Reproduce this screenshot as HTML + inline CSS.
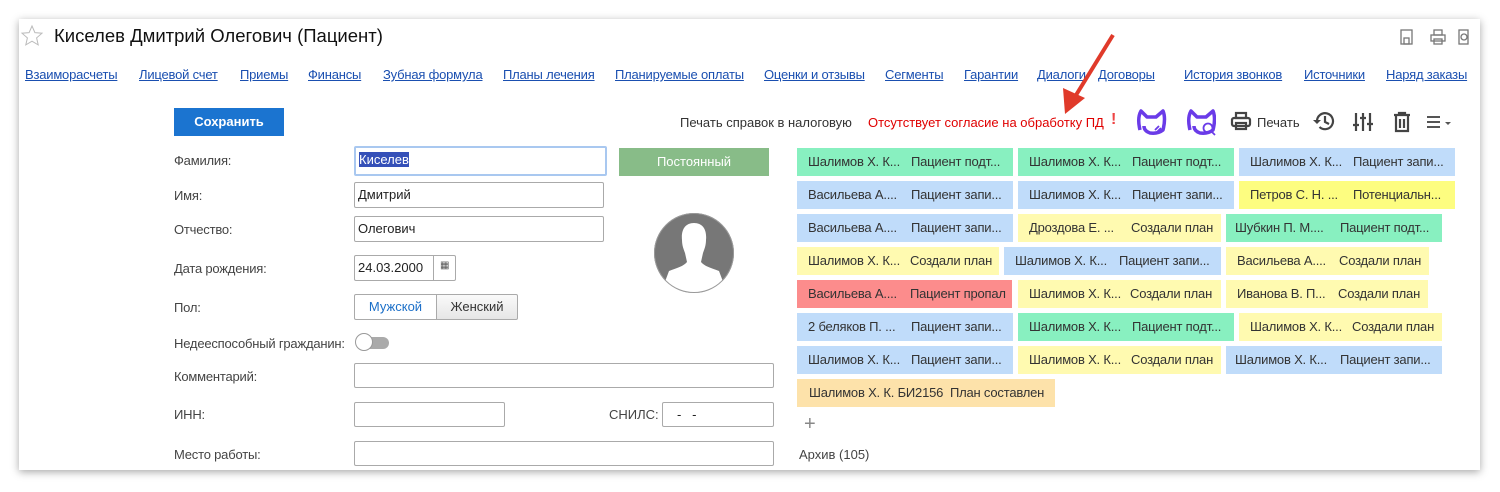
<!DOCTYPE html>
<html><head><meta charset="utf-8"><style>
body{margin:0;width:1500px;height:492px;background:#fff;font-family:"Liberation Sans",sans-serif;font-size:13px;color:#333;position:relative;overflow:hidden}
.a{position:absolute;white-space:nowrap}
#panel{position:absolute;left:19px;top:19px;width:1461px;height:451px;background:#fff;box-shadow:0 2px 8px rgba(0,0,0,.35)}
.nav{position:absolute;top:67px;color:#1a4fb0;text-decoration:underline;font-size:13px;letter-spacing:-.2px}
.lbl{position:absolute;left:174px;color:#444;letter-spacing:-.2px}
.inp{position:absolute;border:1px solid #aaa;border-radius:2px;background:#fff;height:26px;box-sizing:border-box;padding:4px 3px;font-size:13px;color:#222}
.c{position:absolute;height:28px;line-height:28px;color:#333;font-size:13px;letter-spacing:-.2px;white-space:nowrap;overflow:hidden}
.c span{position:absolute}
.g{background:#88f0c0}.b{background:#c0dcfa}.y{background:#fffab0}.Y{background:#fdfd80}.r{background:#fc8c8c}.o{background:#fde2aa}
</style></head><body>
<div id="panel"></div>
<svg class="a" style="left:20px;top:24px" width="24" height="24" viewBox="0 0 24 24"><path d="M12 2l2.9 6.6 7.1.6-5.4 4.7 1.6 7L12 17.2 5.8 20.9l1.6-7L2 9.2l7.1-.6z" fill="none" stroke="#bbb" stroke-width="1"/></svg>
<div class="a" style="left:54px;top:25px;font-size:18.5px;color:#111">Киселев Дмитрий Олегович (Пациент)</div>
<svg class="a" style="left:1399px;top:28px" width="70" height="18"><g fill="none" stroke="#777" stroke-width="1.3"><rect x="2" y="2" width="11" height="14"/><rect x="5" y="10" width="5" height="6"/><rect x="32" y="7" width="14" height="6"/><rect x="35" y="2" width="8" height="5"/><rect x="35" y="11" width="8" height="5"/><rect x="60" y="2" width="9" height="14"/><circle cx="65" cy="9" r="3"/></g></svg>
<a class="nav" style="left:25px">Взаиморасчеты</a>
<a class="nav" style="left:139px">Лицевой счет</a>
<a class="nav" style="left:240px">Приемы</a>
<a class="nav" style="left:308px">Финансы</a>
<a class="nav" style="left:383px">Зубная формула</a>
<a class="nav" style="left:503px">Планы лечения</a>
<a class="nav" style="left:615px">Планируемые оплаты</a>
<a class="nav" style="left:764px">Оценки и отзывы</a>
<a class="nav" style="left:885px">Сегменты</a>
<a class="nav" style="left:964px">Гарантии</a>
<a class="nav" style="left:1037px">Диалоги</a>
<a class="nav" style="left:1098px">Договоры</a>
<a class="nav" style="left:1184px">История звонков</a>
<a class="nav" style="left:1304px">Источники</a>
<a class="nav" style="left:1386px">Наряд заказы</a>
<div class="a" style="left:174px;top:108px;width:110px;height:28px;background:#1b74d0;color:#fff;font-weight:bold;text-align:center;line-height:28px;font-size:13px">Сохранить</div>
<div class="a" style="left:680px;top:115px;color:#333">Печать справок в налоговую</div>
<div class="a" style="left:868px;top:115px;color:#e00000">Отсутствует согласие на обработку ПД</div>
<div class="a" style="left:1111px;top:111px;color:#e44;font-weight:bold;font-size:16px">!</div>
<svg class="a" style="left:1136px;top:108px" width="80" height="32"><g fill="none" stroke="#6a3be8" stroke-width="3.5" stroke-linejoin="round"><path d="M4 22 Q1 10 5 3 L11 9 L20 9 L27 3 Q30 10 27 22 Q22 26 14 25 Q8 23 8 18"/><path d="M54 22 Q51 10 55 3 L61 9 L70 9 L77 3 Q80 10 77 22 Q72 26 64 25 Q58 23 58 18"/></g><g fill="none" stroke="#6a3be8" stroke-width="1.8"><circle cx="72" cy="20" r="4.5"/><path d="M75 23l4 4"/><path d="M19 22l4-4m-2 6l4-4"/></g></svg>
<svg class="a" style="left:1230px;top:111px" width="22" height="20"><g fill="none" stroke="#444" stroke-width="2.2"><rect x="2" y="7" width="18" height="8" rx="2"/><rect x="6" y="2" width="10" height="5"/><rect x="6" y="12" width="10" height="6"/></g></svg>
<div class="a" style="left:1257px;top:115px;color:#333">Печать</div>
<svg class="a" style="left:1312px;top:110px" width="24" height="22"><g fill="none" stroke="#444" stroke-width="2.2"><path d="M5 11a8 8 0 1 1 2.5 6"/><path d="M13 6v6l4 2"/></g><path d="M1 10h8l-4 4z" fill="#444"/></svg>
<svg class="a" style="left:1352px;top:111px" width="22" height="22"><g stroke="#444" stroke-width="2.2"><path d="M4 2v18M11 2v18M18 2v18M1 14h6M8 7h6M15 13h6"/></g></svg>
<svg class="a" style="left:1392px;top:111px" width="20" height="22"><g fill="none" stroke="#444" stroke-width="2.2"><path d="M2 4h16M7 4V2h6v2M4 5v15h12V5M8 8v9M12 8v9"/></g></svg>
<svg class="a" style="left:1426px;top:114px" width="28" height="16"><g stroke="#555" stroke-width="2"><path d="M1 3h13M1 8h13M1 13h13"/></g><path d="M19 8h6l-3 3z" fill="#555"/></svg>
<svg class="a" style="left:1055px;top:30px" width="70" height="90"><path d="M58 5 L18 70" stroke="#e03a2a" stroke-width="4"/><path d="M10 84 L8 58 L30 68 Z" fill="#e03a2a"/></svg>

<div class="lbl" style="top:153px">Фамилия:</div>
<div class="inp" style="left:354px;top:146px;width:253px;height:30px;border:2px solid #a9c8f0"><span style="background:#3550b8;color:#fff">Киселев</span></div>
<div class="a" style="left:619px;top:148px;width:150px;height:28px;background:#88bc88;color:#fff;text-align:center;line-height:28px">Постоянный</div>
<div class="lbl" style="top:188px">Имя:</div>
<div class="inp" style="left:354px;top:182px;width:250px">Дмитрий</div>
<div class="lbl" style="top:222px">Отчество:</div>
<div class="inp" style="left:354px;top:216px;width:250px">Олегович</div>
<div class="lbl" style="top:261px">Дата рождения:</div>
<div class="inp" style="left:354px;top:255px;width:102px">24.03.2000</div>
<div class="a" style="left:433px;top:256px;width:1px;height:24px;background:#aaa"></div>
<div class="a" style="left:440px;top:260px;font-size:10px;color:#555">▦</div>
<svg class="a" style="left:654px;top:213px" width="80" height="82"><defs><clipPath id="cp"><ellipse cx="40" cy="40" rx="40" ry="40"/></clipPath></defs><ellipse cx="40" cy="40" rx="40" ry="40" fill="#777"/><g clip-path="url(#cp)"><path d="M40 10c-9 0-13 7-12 17 0 6 2 10 3 13l2 9c-3 4-10 6-18 9L6 82h68l-9-24c-8-3-15-5-18-9l2-9c1-3 3-7 3-13 1-10-3-17-12-17z" fill="#fff"/></g><ellipse cx="40" cy="40" rx="39.5" ry="39.5" fill="none" stroke="#999"/></svg>
<div class="lbl" style="top:300px">Пол:</div>
<div class="a" style="left:354px;top:294px;width:81px;height:24px;border:1px solid #aaa;border-radius:2px 0 0 2px;background:#fff;color:#1b6fc8;text-align:center;line-height:24px">Мужской</div>
<div class="a" style="left:436px;top:294px;width:80px;height:24px;border:1px solid #aaa;border-radius:0 2px 2px 0;background:linear-gradient(#fafafa,#e6e6e6);color:#333;text-align:center;line-height:24px">Женский</div>
<div class="lbl" style="top:336px">Недееспособный гражданин:</div>
<div class="a" style="left:356px;top:337px;width:33px;height:12px;border-radius:6px;background:#aaa"></div>
<div class="a" style="left:355px;top:333px;width:18px;height:18px;border-radius:50%;background:#fff;border:1px solid #999;box-sizing:border-box"></div>
<div class="lbl" style="top:369px">Комментарий:</div>
<div class="inp" style="left:354px;top:363px;width:420px;height:25px"></div>
<div class="lbl" style="top:407px">ИНН:</div>
<div class="inp" style="left:354px;top:402px;width:151px;height:25px"></div>
<div class="a" style="left:609px;top:407px;color:#444">СНИЛС:</div>
<div class="inp" style="left:662px;top:402px;width:112px;height:25px;padding-left:14px">-&nbsp;&nbsp;&nbsp;-</div>
<div class="lbl" style="top:447px">Место работы:</div>
<div class="inp" style="left:354px;top:441px;width:420px;height:25px"></div>

<div class="c g" style="left:797px;top:148px;width:216px"><span style="left:11px">Шалимов Х. К...</span><span style="left:114px">Пациент подт...</span></div>
<div class="c g" style="left:1018px;top:148px;width:216px"><span style="left:11px">Шалимов Х. К...</span><span style="left:114px">Пациент подт...</span></div>
<div class="c b" style="left:1239px;top:148px;width:216px"><span style="left:11px">Шалимов Х. К...</span><span style="left:114px">Пациент запи...</span></div>
<div class="c b" style="left:797px;top:181px;width:216px"><span style="left:11px">Васильева А....</span><span style="left:114px">Пациент запи...</span></div>
<div class="c b" style="left:1018px;top:181px;width:216px"><span style="left:11px">Шалимов Х. К...</span><span style="left:114px">Пациент запи...</span></div>
<div class="c Y" style="left:1239px;top:181px;width:216px"><span style="left:11px">Петров С. Н. ...</span><span style="left:114px">Потенциальн...</span></div>
<div class="c b" style="left:797px;top:214px;width:216px"><span style="left:11px">Васильева А....</span><span style="left:114px">Пациент запи...</span></div>
<div class="c y" style="left:1018px;top:214px;width:203px"><span style="left:11px">Дроздова Е. ...</span><span style="left:113px">Создали план</span></div>
<div class="c g" style="left:1226px;top:214px;width:216px"><span style="left:9px">Шубкин П. М....</span><span style="left:114px">Пациент подт...</span></div>
<div class="c y" style="left:797px;top:247px;width:202px"><span style="left:11px">Шалимов Х. К...</span><span style="left:113px">Создали план</span></div>
<div class="c b" style="left:1004px;top:247px;width:217px"><span style="left:11px">Шалимов Х. К...</span><span style="left:115px">Пациент запи...</span></div>
<div class="c y" style="left:1226px;top:247px;width:203px"><span style="left:11px">Васильева А....</span><span style="left:113px">Создали план</span></div>
<div class="c r" style="left:797px;top:280px;width:215px"><span style="left:11px">Васильева А....</span><span style="left:113px">Пациент пропал</span></div>
<div class="c y" style="left:1018px;top:280px;width:203px"><span style="left:11px">Шалимов Х. К...</span><span style="left:112px">Создали план</span></div>
<div class="c y" style="left:1226px;top:280px;width:202px"><span style="left:11px">Иванова В. П...</span><span style="left:112px">Создали план</span></div>
<div class="c b" style="left:797px;top:313px;width:216px"><span style="left:11px">2 беляков П. ...</span><span style="left:114px">Пациент запи...</span></div>
<div class="c g" style="left:1018px;top:313px;width:216px"><span style="left:11px">Шалимов Х. К...</span><span style="left:114px">Пациент подт...</span></div>
<div class="c y" style="left:1239px;top:313px;width:203px"><span style="left:11px">Шалимов Х. К...</span><span style="left:113px">Создали план</span></div>
<div class="c b" style="left:797px;top:346px;width:216px"><span style="left:11px">Шалимов Х. К...</span><span style="left:114px">Пациент запи...</span></div>
<div class="c y" style="left:1018px;top:346px;width:203px"><span style="left:11px">Шалимов Х. К...</span><span style="left:113px">Создали план</span></div>
<div class="c b" style="left:1226px;top:346px;width:216px"><span style="left:9px">Шалимов Х. К...</span><span style="left:114px">Пациент запи...</span></div>
<div class="c o" style="left:797px;top:379px;width:258px"><span style="left:12px">Шалимов Х. К. БИ2156&nbsp; План составлен</span></div>
<div class="a" style="left:804px;top:413px;font-size:20px;color:#888">+</div>
<div class="a" style="left:799px;top:447px;color:#444">Архив (105)</div>
</body></html>
